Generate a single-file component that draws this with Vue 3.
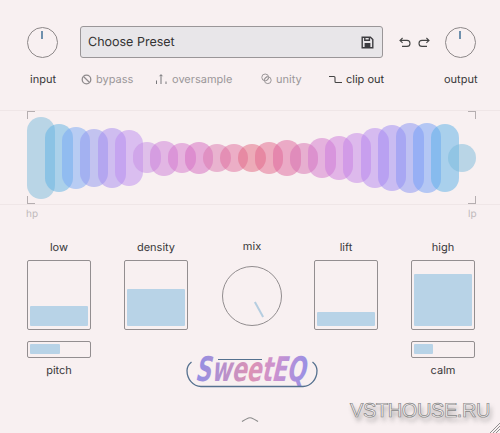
<script setup>
const blobs = [
  [27, 116, 198, '#b9d5e6'], [45, 123, 191, '#abd1ea'], [62, 126, 188, '#b8ccf3'],
  [80, 128, 186, '#c3c3f0'], [98, 127, 187, '#cfbdf0'], [115, 129, 185, '#dabef0'],
  [133, 141, 172, '#dfbfea'], [150, 140, 175, '#e2b6e4'], [168, 142, 172, '#e6b2de'],
  [185, 141, 173, '#e6acd8'], [203, 143, 171, '#e9b3cf'], [220, 143, 171, '#ecaec6'],
  [238, 143, 171, '#edabb8'], [255, 141, 173, '#edabbe'], [273, 139, 175, '#ebaac6'],
  [290, 142, 173, '#e7afd0'], [308, 137, 177, '#e5b2de'], [325, 135, 179, '#e2b4e6'],
  [343, 132, 182, '#ddb9ec'], [361, 127, 187, '#d6bbf0'], [378, 124, 190, '#cabcf2'],
  [396, 122, 192, '#bfc1f2'], [413, 122, 192, '#b4c7f4'], [431, 123, 191, '#a9d0ec'],
  [448, 143, 171, '#b9d5e6']
]

// colours above are what a blob looks like on the page, so work out the half-opaque paint
const paint = (hex) => {
  const page = [248, 240, 241]
  const rgb = page.map((p, i) => 2 * parseInt(hex.slice(1 + i * 2, 3 + i * 2), 16) - p)
  return `rgba(${rgb.join(',')},0.5)`
}

const blobStyle = (b) => ({
  left: b[0] + 'px',
  top: b[1] - 110 + 'px',
  height: b[2] - b[1] + 'px',
  background: paint(b[3])
})

const faders = [
  { label: 'low', level: 20, sub: 'pitch', subLevel: 30 },
  { label: 'density', level: 37 },
  { mix: true },
  { label: 'lift', level: 14 },
  { label: 'high', level: 52, sub: 'calm', subLevel: 19 }
]
</script>

<template>
  <div class="plugin">
    <div class="top">
      <div class="knob"><i></i></div>
      <div class="preset">
        <span>Choose Preset</span>
        <svg width="13" height="13" viewBox="0 0 13 13" fill="none" stroke="#3c3c40" stroke-width="1.4">
          <path d="M1.2 1.200h8.200l2.400 2.400v8.200H1.200z" />
          <path d="M3.800 1.400v2.800h4.600V1.400" />
          <rect x="3.600" y="7" width="5.800" height="4.600" fill="#3c3c40" stroke="none" />
        </svg>
      </div>
      <div class="history">
        <svg width="12" height="11" viewBox="0 0 12 11" fill="none" stroke="#444" stroke-width="1.1">
          <path d="M3.600 1 1 3.400l2.600 2.400M1 3.400h7a2.900 2.900 0 0 1 0 6H3" />
        </svg>
        <svg width="12" height="11" viewBox="0 0 12 11" fill="none" stroke="#444" stroke-width="1.1">
          <path d="M8.400 1 11 3.400 8.400 5.800M11 3.400H4a2.900 2.900 0 0 0 0 6h5" />
        </svg>
      </div>
      <div class="knob"><i></i></div>
    </div>

    <div class="options">
      <span class="io">input</span>
      <span class="opt bypass">
        <svg width="11" height="11" viewBox="0 0 11 11" fill="none" stroke="#8f8b8d" stroke-width="1.3">
          <circle cx="5.500" cy="5.500" r="4.300" /><path d="m2.500 2.500 6 6" />
        </svg>
        bypass
      </span>
      <span class="opt oversample">
        <svg width="13" height="12" viewBox="0 0 13 12" fill="none" stroke="#77777a" stroke-width="1">
          <path d="M1.500 11V7.500M6 11V2M4.600 3.200 6 1.600l1.400 1.600M11 11V8.500" />
        </svg>
        oversample
      </span>
      <span class="opt unity">
        <svg width="11" height="12" viewBox="0 0 11 12" fill="none" stroke="#9b9799" stroke-width="1">
          <circle cx="4.200" cy="4.400" r="3.400" /><circle cx="6.800" cy="7.200" r="3.400" /><path d="m3 6.600 3.400-3.600M5 8l3-3.200" />
        </svg>
        unity
      </span>
      <span class="opt clip">
        <svg width="13" height="9" viewBox="0 0 13 9" fill="none" stroke="#444" stroke-width="1.1">
          <path d="M0 1.500h5a1 1 0 0 1 1 1v4a1 1 0 0 0 1 1h6" />
        </svg>
        clip out
      </span>
      <span class="io out">output</span>
    </div>

    <div class="display">
      <div v-for="(b, i) in blobs" :key="i" class="blob" :style="blobStyle(b)"></div>
      <i class="corner tl"></i><i class="corner bl"></i><i class="corner tr"></i><i class="corner br"></i>
      <span class="edge hp">hp</span>
      <span class="edge lp">lp</span>
    </div>

    <div class="controls">
      <div v-for="f in faders" :key="f.label || 'mix'" class="col" :class="{ mixcol: f.mix }">
        <template v-if="f.mix">
          <span class="label mixlabel">mix</span>
          <div class="bigknob"><i></i></div>
        </template>
        <template v-else>
          <span class="label">{{ f.label }}</span>
          <div class="fader">
            <div class="fill" :style="{ height: f.level + 'px' }"></div>
          </div>
          <template v-if="f.sub">
            <div class="slider">
              <div class="fill" :style="{ width: f.subLevel + 'px' }"></div>
            </div>
            <span class="label sub">{{ f.sub }}</span>
          </template>
        </template>
      </div>
    </div>

    <svg class="logo" width="200" height="50" viewBox="0 -14 200 50">
      <defs>
        <linearGradient id="sweet" gradientUnits="userSpaceOnUse" x1="10" x2="122" y1="0" y2="0">
          <stop offset="0" stop-color="#8f8fe6" />
          <stop offset="0.5" stop-color="#dc92b4" />
          <stop offset="0.72" stop-color="#cc92d0" />
          <stop offset="1" stop-color="#9a90e4" />
        </linearGradient>
      </defs>
      <text x="13" y="25" class="logotext" fill="url(#sweet)" textLength="110" lengthAdjust="spacingAndGlyphs" transform="skewX(-6)">SweetEQ</text>
      <path d="M32 3.500h44" stroke="#55718f" stroke-width="1.100" />
      <path d="M5.500 6C2 9 1 11.500 1 14.500 1 23 7 30.500 15 30.500h102c8 0 14-7.500 14-16 0-3-1-5.500-4.500-8.500" fill="none" stroke="#55718f" stroke-width="1.300" />
    </svg>

    <svg class="chevron" width="18" height="7" viewBox="0 0 18 7" fill="none" stroke="#8b8b8b" stroke-width="1.200">
      <path d="M1 5.500Q5 3 7.500 2q1.500-.5 3 0 2.500 1 6.500 3.500" />
    </svg>

    <span class="mark">VSTHOUSE.RU</span>

    <svg class="resize" width="10" height="10" viewBox="0 0 10 10" stroke="#777" stroke-width="0.8">
      <path d="M0 10 10 0M3 10l7-7M6 10l4-4" />
    </svg>
  </div>
</template>

<style scoped>
.plugin {
  position: relative;
  width: 500px;
  height: 433px;
  overflow: hidden;
  background: #f8f0f1;
  color: #38383a;
  font-family: Inter, "Liberation Sans", sans-serif;
  font-size: 11px;
  text-rendering: geometricPrecision;
}
.top {
  display: flex;
  align-items: center;
  height: 32px;
  padding: 26px 24px 0 27px;
}
.knob {
  position: relative;
  width: 31px;
  height: 31px;
  box-sizing: border-box;
  border: 1.3px solid #8d8889;
  border-radius: 50%;
}
.knob i {
  position: absolute;
  left: 13px;
  top: 3px;
  width: 2px;
  height: 8px;
  background: #6f90ad;
}
.preset {
  display: flex;
  align-items: center;
  justify-content: space-between;
  box-sizing: border-box;
  width: 303px;
  height: 32px;
  margin-left: 22px;
  padding: 0 8px 0 7px;
  background: #e8e6e9;
  border: 1px solid #9a9698;
  border-radius: 3px;
  font-size: 12.500px;
  color: #333;
}
.history {
  display: flex;
  gap: 7px;
  margin-left: 16px;
  width: 46px;
}
.options {
  position: relative;
  height: 22px;
  margin-top: 10px;
  line-height: 22px;
}
.options > span {
  position: absolute;
  top: 0;
  display: flex;
  align-items: center;
  gap: 4px;
  white-space: nowrap;
}
.io { left: 30px; }
.io.out { left: 444px; }
.opt { color: #9b9799; }
.bypass { left: 81px; }
.oversample { left: 155px; }
.unity { left: 261px; }
.clip { left: 329px; color: #333; }
.display {
  position: relative;
  height: 93px;
  margin-top: 20px;
  border-top: 1px solid #efe6e7;
  border-bottom: 1px solid #efe6e7;
}
.blob {
  position: absolute;
  width: 28px;
  border-radius: 14px;
}
.corner {
  position: absolute;
  width: 7px;
  height: 7px;
  border: 0 solid #b5aeb0;
}
.tl { left: 27px; top: 0; border-width: 1px 0 0 1px; }
.bl { left: 27px; bottom: 0; border-width: 0 0 1px 1px; }
.tr { left: 468px; top: 0; border-width: 1px 1px 0 0; }
.br { left: 468px; bottom: 0; border-width: 0 1px 1px 0; }
.edge {
  position: absolute;
  top: 97px;
  font-size: 10px;
  color: #c0babc;
}
.hp { left: 26px; }
.lp { left: 468px; }
.controls {
  display: flex;
  justify-content: space-between;
  padding: 0 25px 0 27px;
  margin-top: 35px;
}
.col {
  display: flex;
  flex-direction: column;
  align-items: center;
  width: 64px;
}
.mixcol {
  width: 60px;
  margin: 0 -1px 0 1px;
}
.label { height: 14px; line-height: 14px; }
.fader {
  position: relative;
  box-sizing: border-box;
  width: 64px;
  height: 70px;
  margin-top: 6px;
  border: 1px solid #938e90;
  border-radius: 2px;
}
.fader .fill {
  position: absolute;
  left: 2px;
  right: 2px;
  bottom: 3px;
  background: #b8d3e7;
  border-radius: 1px;
}
.slider {
  box-sizing: border-box;
  width: 64px;
  height: 17px;
  margin-top: 11px;
  padding: 2px;
  border: 1px solid #938e90;
  border-radius: 2px;
}
.slider .fill {
  height: 10px;
  background: #b8d3e7;
  border-radius: 1px;
}
.sub { margin-top: 5px; }
.mixlabel { margin-top: -1px; }
.bigknob {
  position: relative;
  box-sizing: border-box;
  width: 60px;
  height: 60px;
  margin-top: 13px;
  border: 1px solid #928d8f;
  border-radius: 50%;
}
.bigknob i {
  position: absolute;
  left: 35px;
  top: 34px;
  width: 2px;
  height: 17px;
  background: #b5cde0;
  transform: rotate(-29deg);
}
.logo {
  position: absolute;
  left: 186px;
  top: 342px;
}
.logotext {
  font-family: "DejaVu Sans", sans-serif;
  font-size: 34px;
  font-weight: 700;
  font-style: italic;
}
.chevron {
  position: absolute;
  left: 241px;
  top: 416px;
}
.mark {
  position: absolute;
  left: 350px;
  top: 400px;
  font-family: "Liberation Sans", sans-serif;
  font-size: 20px;
  letter-spacing: -0.4px;
  white-space: nowrap;
  color: #fbf6f7;
  -webkit-text-stroke: 0.7px #858585;
  text-shadow: 2px 4px 4px rgba(90, 90, 90, 0.5);
}
.resize {
  position: absolute;
  right: 0;
  bottom: 0;
}
</style>
